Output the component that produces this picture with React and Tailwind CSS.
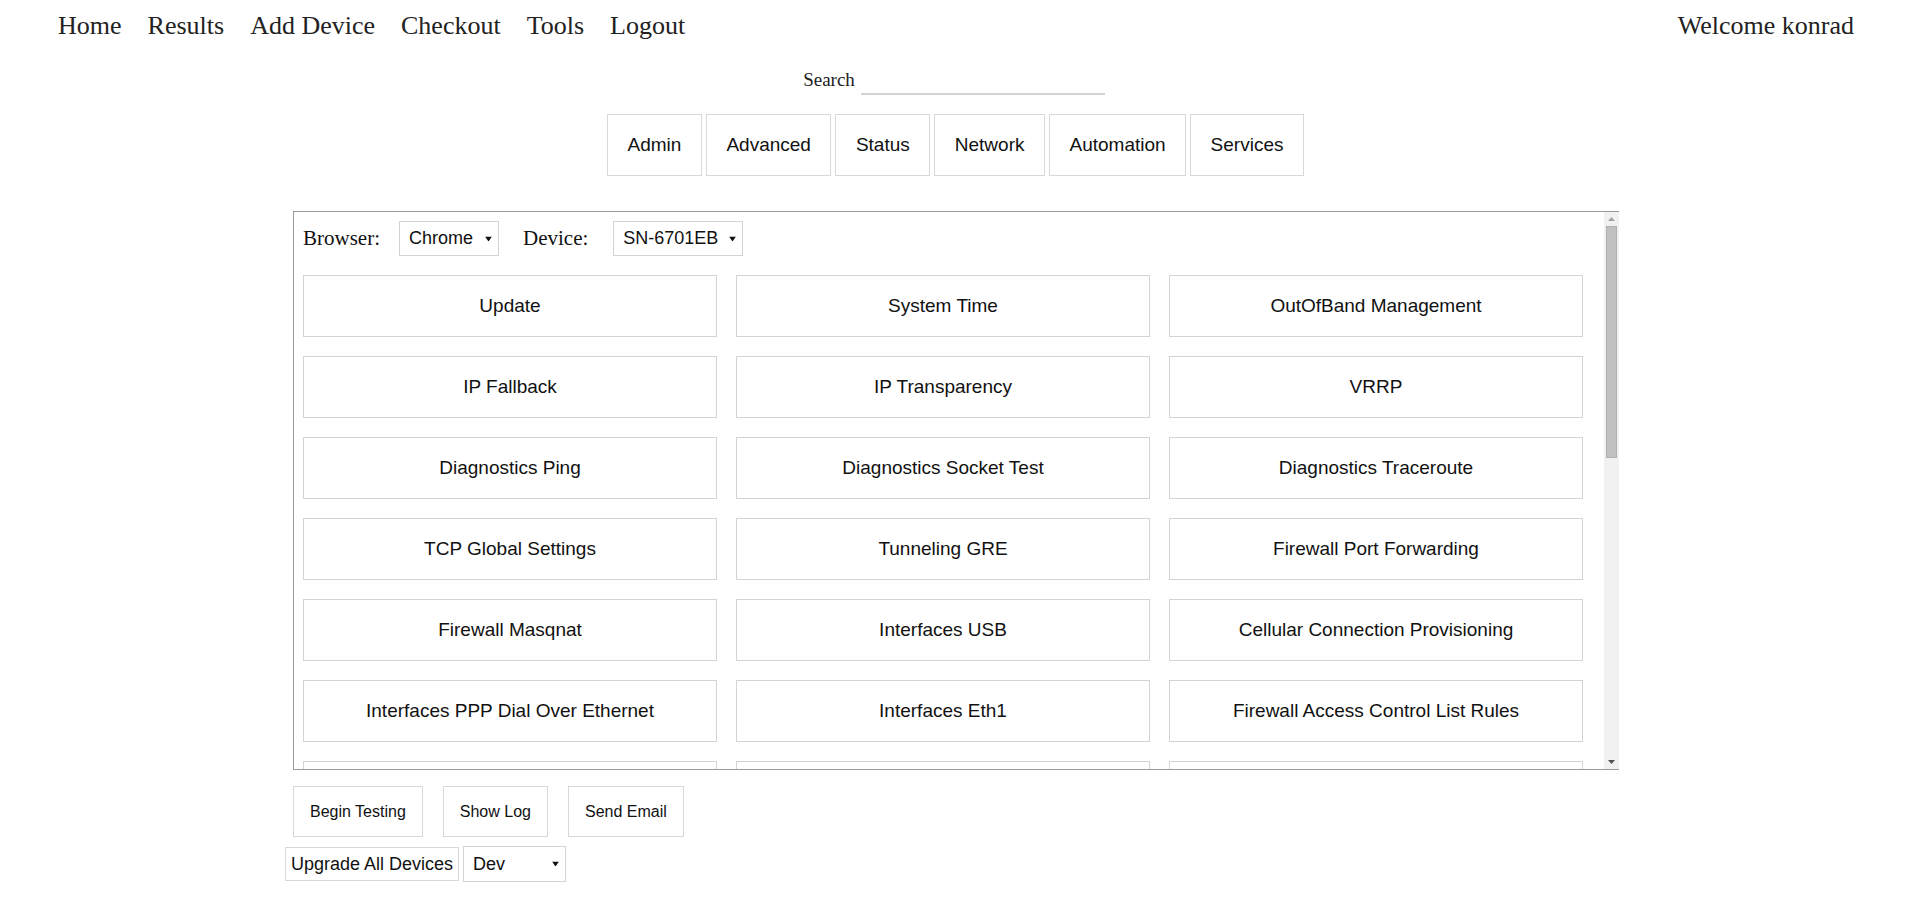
import { useState } from 'react';

const navLinks = ['Home', 'Results', 'Add Device', 'Checkout', 'Tools', 'Logout'];
const categories = ['Admin', 'Advanced', 'Status', 'Network', 'Automation', 'Services'];

// tests shown for the selected category
const tests = [
  'Update', 'System Time', 'OutOfBand Management',
  'IP Fallback', 'IP Transparency', 'VRRP',
  'Diagnostics Ping', 'Diagnostics Socket Test', 'Diagnostics Traceroute',
  'TCP Global Settings', 'Tunneling GRE', 'Firewall Port Forwarding',
  'Firewall Masqnat', 'Interfaces USB', 'Cellular Connection Provisioning',
  'Interfaces PPP Dial Over Ethernet', 'Interfaces Eth1', 'Firewall Access Control List Rules',
];
// next row peeks in at the bottom of the list, labels below the fold
const peekRow = 3;

const serif = 'font-["Liberation_Serif",serif]';
const sans = 'font-["Liberation_Sans",Arial,sans-serif]';

function Dropdown({ value, options, onChange, width, textSize }) {
  return (
    <div className={`relative ${width}`}>
      <select
        value={value}
        onChange={(e) => onChange(e.target.value)}
        className={`w-full h-full appearance-none bg-white border border-[#d4d4d4] pl-[9px] pr-[20px] text-[#111] ${textSize} ${sans} outline-none`}
      >
        {options.map((o) => (
          <option key={o}>{o}</option>
        ))}
      </select>
      <svg className="pointer-events-none absolute right-[7px] top-1/2 -translate-y-1/2" width="7" height="5" viewBox="0 0 7 5">
        <path d="M0 0h7L3.5 5z" fill="#111" />
      </svg>
    </div>
  );
}

function Scrollbar() {
  return (
    <div className="w-[15px] shrink-0 bg-[#f1f1f1] flex flex-col">
      <div className="h-[14px] flex items-center justify-center">
        <svg width="7" height="4" viewBox="0 0 7 4">
          <path d="M0 4h7L3.5 0z" fill="#a3a3a3" />
        </svg>
      </div>
      <div className="h-[232px] mx-[2px] bg-[#c1c1c1] border border-[#b0b0b0]" />
      <div className="flex-1" />
      <div className="h-[15px] flex items-center justify-center">
        <svg width="7" height="4" viewBox="0 0 7 4">
          <path d="M0 0h7L3.5 4z" fill="#505050" />
        </svg>
      </div>
    </div>
  );
}

export default function App() {
  const [browser, setBrowser] = useState('Chrome');
  const [device, setDevice] = useState('SN-6701EB');
  const [branch, setBranch] = useState('Dev');
  const [search, setSearch] = useState('');

  return (
    <div className="min-h-screen bg-white text-[#222]">
      {/* top bar */}
      <nav className={`flex justify-between px-[58px] pt-[11px] text-[26px] leading-[30px] ${serif}`}>
        <div className="flex gap-[26px]">
          {navLinks.map((l) => (
            <a key={l} href="#" className="text-[#222]">{l}</a>
          ))}
        </div>
        <span className="mr-[3px]">Welcome konrad</span>
      </nav>

      {/* search */}
      <div className={`flex justify-center items-end mt-[30px] h-[24px] pr-[7px] ${serif}`}>
        <span className="text-[19px] leading-[22px] mb-[4px] mr-[6px]">Search</span>
        <input
          value={search}
          onChange={(e) => setSearch(e.target.value)}
          className="w-[244px] h-[22px] border-b-2 border-[#d3d3d3] outline-none text-[17px]"
        />
      </div>

      {/* category tabs */}
      <div className={`flex justify-center gap-[4px] mt-[19px] pr-[4px] ${sans}`}>
        {categories.map((c) => (
          <button key={c} className="h-[62px] px-[19.5px] border border-[#d8d8d8] bg-white text-[19px] text-[#111]">
            {c}
          </button>
        ))}
      </div>

      {/* test list */}
      <div className="flex justify-center pr-[3px] mt-[35px]">
        <div className="w-[1326px]">
          <div className="h-[559px] flex border-t border-l border-b border-[#9a9a9a]">
            <div className="flex-1 overflow-hidden pt-[9px] pl-[9px]">
              <div className="flex items-center h-[35px]">
                <span className={`text-[21px] text-[#111] mr-[19px] ${serif}`}>Browser:</span>
                <Dropdown value={browser} onChange={setBrowser} options={['Chrome', 'Firefox', 'Edge']} width="w-[100px] h-[35px]" textSize="text-[18px]" />
                <span className={`text-[21px] text-[#111] ml-[24px] mr-[25px] ${serif}`}>Device:</span>
                <Dropdown value={device} onChange={setDevice} options={['SN-6701EB', 'SN-6702EB', 'SN-6703EB']} width="w-[130px] h-[35px]" textSize="text-[18px]" />
              </div>
              <div className="grid grid-cols-[repeat(3,414px)] gap-[19px] mt-[19px]">
                {tests.map((t) => (
                  <button key={t} className={`h-[62px] border border-[#d4d4d4] bg-white text-[19px] text-[#111] ${sans}`}>
                    {t}
                  </button>
                ))}
                {Array.from({ length: peekRow }).map((_, i) => (
                  <div key={i} className="h-[62px] border border-[#d4d4d4] bg-white" />
                ))}
              </div>
            </div>
            <Scrollbar />
          </div>

          {/* actions */}
          <div className={`flex gap-[20px] mt-[16px] ${sans}`}>
            {['Begin Testing', 'Show Log', 'Send Email'].map((b) => (
              <button key={b} className="h-[51px] px-[16px] border border-[#d8d8d8] bg-white text-[16px] text-[#111]">
                {b}
              </button>
            ))}
          </div>
          <div className={`flex items-center gap-[4px] mt-[9px] -ml-[8px] ${sans}`}>
            <button className="h-[34px] px-[5px] border border-[#d8d8d8] bg-white text-[18px] text-[#111]">
              Upgrade All Devices
            </button>
            <Dropdown value={branch} onChange={setBranch} options={['Dev', 'Beta', 'Release']} width="w-[103px] h-[36px]" textSize="text-[18px]" />
          </div>
        </div>
      </div>
    </div>
  );
}
